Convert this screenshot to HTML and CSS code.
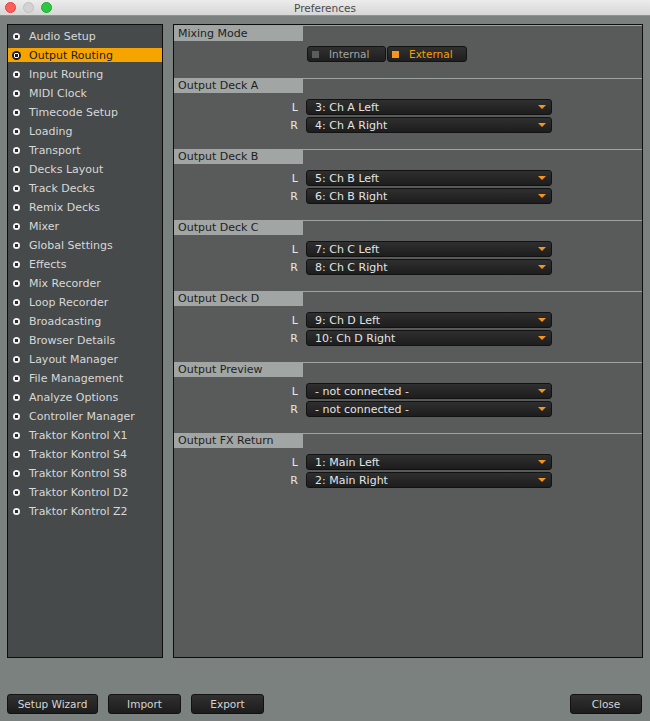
FILE: index.html
```html
<!DOCTYPE html>
<html lang="en">
<head>
  <meta charset="UTF-8" />
  <meta name="viewport" content="width=device-width, initial-scale=1.0"/>
  <title>Preferences</title>
  <link rel="stylesheet" href="styles.css">
</head>
<body>

  <div class="titlebar">
    <div class="lights">
      <span class="light red"></span>
      <span class="light gray"></span>
      <span class="light green"></span>
    </div>
    <div class="title">Preferences</div>
  </div>

  <div class="panes">
    <ul class="sidebar">
      <li><span class="dot"></span>Audio Setup</li>
      <li class="active"><span class="dot"></span>Output Routing</li>
      <li><span class="dot"></span>Input Routing</li>
      <li><span class="dot"></span>MIDI Clock</li>
      <li><span class="dot"></span>Timecode Setup</li>
      <li><span class="dot"></span>Loading</li>
      <li><span class="dot"></span>Transport</li>
      <li><span class="dot"></span>Decks Layout</li>
      <li><span class="dot"></span>Track Decks</li>
      <li><span class="dot"></span>Remix Decks</li>
      <li><span class="dot"></span>Mixer</li>
      <li><span class="dot"></span>Global Settings</li>
      <li><span class="dot"></span>Effects</li>
      <li><span class="dot"></span>Mix Recorder</li>
      <li><span class="dot"></span>Loop Recorder</li>
      <li><span class="dot"></span>Broadcasting</li>
      <li><span class="dot"></span>Browser Details</li>
      <li><span class="dot"></span>Layout Manager</li>
      <li><span class="dot"></span>File Management</li>
      <li><span class="dot"></span>Analyze Options</li>
      <li><span class="dot"></span>Controller Manager</li>
      <li><span class="dot"></span>Traktor Kontrol X1</li>
      <li><span class="dot"></span>Traktor Kontrol S4</li>
      <li><span class="dot"></span>Traktor Kontrol S8</li>
      <li><span class="dot"></span>Traktor Kontrol D2</li>
      <li><span class="dot"></span>Traktor Kontrol Z2</li>
    </ul>

    <div class="main">
      <div class="section first">
        <div class="section-head">Mixing Mode</div>
        <div class="mode-row">
          <div class="mode-btn"><span class="box"></span>Internal</div>
          <div class="mode-btn on"><span class="box"></span>External</div>
        </div>
      </div>

      <div class="section">
        <div class="section-head">Output Deck A</div>
        <div class="row"><span class="lbl">L</span><div class="select">3: Ch A Left<span class="arrow"></span></div></div>
        <div class="row"><span class="lbl">R</span><div class="select">4: Ch A Right<span class="arrow"></span></div></div>
      </div>

      <div class="section">
        <div class="section-head">Output Deck B</div>
        <div class="row"><span class="lbl">L</span><div class="select">5: Ch B Left<span class="arrow"></span></div></div>
        <div class="row"><span class="lbl">R</span><div class="select">6: Ch B Right<span class="arrow"></span></div></div>
      </div>

      <div class="section">
        <div class="section-head">Output Deck C</div>
        <div class="row"><span class="lbl">L</span><div class="select">7: Ch C Left<span class="arrow"></span></div></div>
        <div class="row"><span class="lbl">R</span><div class="select">8: Ch C Right<span class="arrow"></span></div></div>
      </div>

      <div class="section">
        <div class="section-head">Output Deck D</div>
        <div class="row"><span class="lbl">L</span><div class="select">9: Ch D Left<span class="arrow"></span></div></div>
        <div class="row"><span class="lbl">R</span><div class="select">10: Ch D Right<span class="arrow"></span></div></div>
      </div>

      <div class="section">
        <div class="section-head">Output Preview</div>
        <div class="row"><span class="lbl">L</span><div class="select">- not connected -<span class="arrow"></span></div></div>
        <div class="row"><span class="lbl">R</span><div class="select">- not connected -<span class="arrow"></span></div></div>
      </div>

      <div class="section">
        <div class="section-head">Output FX Return</div>
        <div class="row"><span class="lbl">L</span><div class="select">1: Main Left<span class="arrow"></span></div></div>
        <div class="row"><span class="lbl">R</span><div class="select">2: Main Right<span class="arrow"></span></div></div>
      </div>
    </div>
  </div>

  <div class="footer">
    <button class="btn wizard">Setup Wizard</button>
    <button class="btn">Import</button>
    <button class="btn">Export</button>
    <button class="btn close">Close</button>
  </div>

</body>
</html>
```

FILE: styles.css
```css
body {
  margin: 0;
  width: 650px;
  height: 721px;
  background: #7a817f;
  font-family: 'DejaVu Sans', 'Liberation Sans', sans-serif;
  font-size: 11px;
  overflow: hidden;
}

.titlebar {
  position: relative;
  height: 15px;
  background: linear-gradient(#ececec, #d6d6d6);
  border-bottom: 1px solid #8e9291;
}

.lights {
  display: flex;
  gap: 7px;
  padding: 2px 0 0 5px;
}

.light {
  width: 11px;
  height: 11px;
  border-radius: 50%;
  box-sizing: border-box;
}

.light.red { background: #fc5f57; border: 1px solid #e0443e; }
.light.gray { background: #d2d2d2; border: 1px solid #c0c0c0; }
.light.green { background: #2ec840; border: 1px solid #1fa82f; }

.title {
  position: absolute;
  top: 1px;
  left: 0;
  right: 0;
  text-align: center;
  line-height: 15px;
  font-size: 10.5px;
  color: #4a4a4a;
}

.panes {
  display: flex;
  gap: 10px;
  padding: 8px 7px 0 7px;
  height: 634px;
}

.sidebar {
  list-style: none;
  margin: 0;
  padding: 4px 0 0 0;
  width: 156px;
  box-sizing: border-box;
  background: #464a4b;
  border: 1px solid #0e0e0e;
}

.sidebar li {
  display: flex;
  align-items: center;
  height: 14px;
  margin-bottom: 5px;
  padding-left: 4px;
  color: #d8d8d8;
}

.sidebar .dot {
  width: 7px;
  height: 7px;
  margin: 0 9px 0 1px;
  border-radius: 50%;
  background: radial-gradient(circle, #2a2a2a 0 1.6px, #f2f2f2 2px);
}

.sidebar li.active {
  background: #f6a500;
  color: #1a1a1a;
}

.sidebar li.active .dot {
  width: 9px;
  height: 9px;
  margin: 0 8px 0 0;
  background: radial-gradient(circle, #1a1a1a 0 1.6px, #fafafa 2px 2.6px, #1a1a1a 3px);
}

.main {
  flex: 1;
  background: #595b5a;
  border: 1px solid #0e0e0e;
  box-shadow: inset 0 1px 0 #9ea2a1;
}

.section {
  border-top: 1px solid #9ea2a1;
  padding-bottom: 16px;
}

.section.first {
  border-top: none;
  padding-top: 1px;
}

.section-head {
  width: 125px;
  height: 15px;
  line-height: 15px;
  margin-top: -1px;
  padding-left: 4px;
  background: #a1a5a4;
  color: #1e1e1e;
}

.section.first .section-head {
  margin-top: 0;
}

.mode-row {
  display: flex;
  gap: 1px;
  margin: 5px 0 0 133px;
}

.mode-btn {
  display: flex;
  align-items: center;
  width: 79px;
  height: 16px;
  box-sizing: border-box;
  padding-left: 4px;
  background: linear-gradient(#303030, #1f1f1f);
  border: 1px solid #131313;
  border-radius: 3px;
  color: #a3a3a3;
  font-size: 10.5px;
}

.mode-btn.on {
  width: 80px;
  color: #f6a000;
}

.mode-btn .box {
  width: 7px;
  height: 7px;
  margin-right: 10px;
  background: #5c5c5c;
}

.mode-btn.on .box {
  background: #f7941d;
}

.row {
  display: flex;
  align-items: center;
  gap: 8px;
  margin-top: 2px;
}

.section-head + .row {
  margin-top: 6px;
}

.lbl {
  width: 124px;
  text-align: right;
  color: #e6e6e6;
}

.select {
  display: flex;
  align-items: center;
  justify-content: space-between;
  width: 246px;
  height: 16px;
  box-sizing: border-box;
  padding: 0 5px 0 8px;
  background: linear-gradient(#2f2f2f, #1d1d1d);
  border: 1px solid #121212;
  border-radius: 3px;
  color: #e4e4e4;
}

.arrow {
  width: 0;
  height: 0;
  border-left: 4px solid transparent;
  border-right: 4px solid transparent;
  border-top: 4px solid #f7941d;
}

.footer {
  display: flex;
  gap: 10px;
  padding: 36px 8px 0 7px;
}

.btn {
  height: 20px;
  width: 73px;
  padding: 0;
  background: linear-gradient(#313131, #1c1c1c);
  border: 1px solid #111;
  border-radius: 3px;
  color: #d4d4d4;
  font-family: 'DejaVu Sans', 'Liberation Sans', sans-serif;
  font-size: 10.5px;
}

.btn.wizard {
  width: 91px;
}

.btn.close {
  width: 72px;
  margin-left: auto;
}
```
